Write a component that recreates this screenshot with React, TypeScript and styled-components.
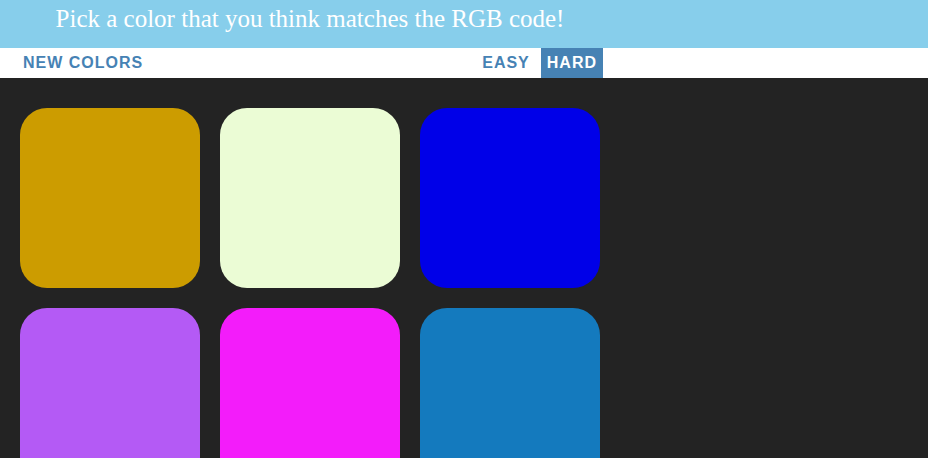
import React from "react";
import styled, { createGlobalStyle } from "styled-components";

const Global = createGlobalStyle`
  html, body { margin: 0; padding: 0; background: #232323; }
  body { font-family: "Liberation Sans", Arial, sans-serif; }
`;

const Header = styled.header`
  background: #87ceeb;
  height: 48px;
`;

const Title = styled.h1`
  margin: 0;
  width: 620px;
  text-align: center;
  font-family: "Liberation Serif", "Times New Roman", serif;
  font-weight: normal;
  font-size: 25px;
  line-height: 38px;
  color: #fff;
`;

const Stripe = styled.nav`
  background: #fff;
  height: 30px;
  display: flex;
  align-items: stretch;
`;

const Bar = styled.div`
  width: 603px;
  display: flex;
  align-items: stretch;
`;

const NavButton = styled.button<{ $active?: boolean; $gap?: string }>`
  border: none;
  margin: 0 0 0 ${(p) => p.$gap ?? "0"};
  padding: 0 6px;
  height: 30px;
  background: ${(p) => (p.$active ? "steelblue" : "#fff")};
  color: ${(p) => (p.$active ? "#fff" : "steelblue")};
  font-family: "Liberation Sans", Arial, sans-serif;
  font-weight: bold;
  font-size: 16px;
  letter-spacing: 1px;
  text-transform: uppercase;
  line-height: 30px;
  cursor: pointer;
`;

const NewColors = styled(NavButton)`
  padding: 0 0 0 23px;
`;

const Grid = styled.main`
  width: 600px;
  padding: 30px 0 0 20px;
  display: flex;
  flex-wrap: wrap;
  gap: 20px;
`;

const Square = styled.div<{ $color: string }>`
  width: 180px;
  height: 180px;
  border-radius: 15%;
  background: ${(p) => p.$color};
`;

const colors = [
  "rgb(204, 156, 0)",
  "rgb(235, 252, 213)",
  "rgb(0, 0, 232)",
  "rgb(180, 90, 245)",
  "rgb(243, 28, 250)",
  "rgb(20, 122, 190)",
];

export default function App() {
  return (
    <>
      <Global />
      <Header>
        <Title>Pick a color that you think matches the RGB code!</Title>
      </Header>
      <Stripe>
        <Bar>
          <NewColors>New Colors</NewColors>
          <NavButton $gap="auto">Easy</NavButton>
          <NavButton $active $gap="5px">Hard</NavButton>
        </Bar>
      </Stripe>
      <Grid>
        {colors.map((c) => (
          <Square key={c} $color={c} />
        ))}
      </Grid>
    </>
  );
}
